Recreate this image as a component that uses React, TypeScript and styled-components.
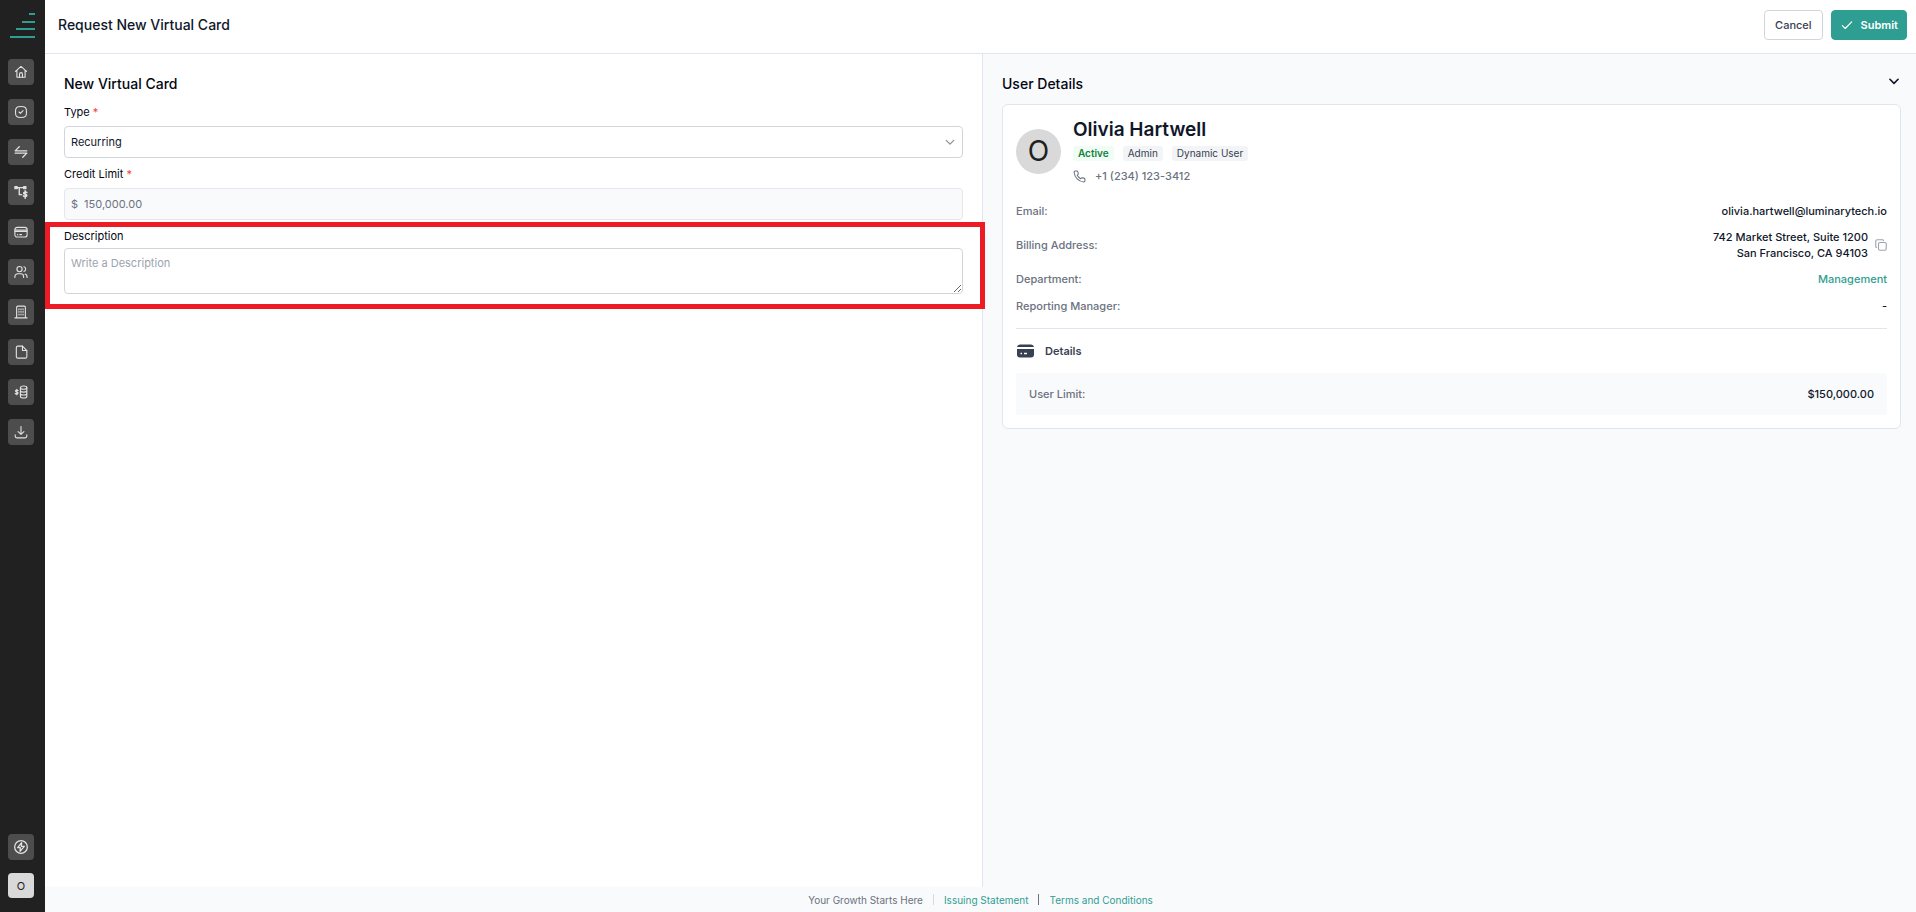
import React from 'react';
import styled, { createGlobalStyle } from 'styled-components';

const GlobalStyle = createGlobalStyle`
  *, *::before, *::after { box-sizing: border-box; }
  body {
    margin: 0;
    font-family: Inter, "Liberation Sans", sans-serif;
    font-size: 11px;
    line-height: 16px;
    color: #0f172a;
    background: #fff;
  }
  button, input, select, textarea { font: inherit; color: inherit; }
  h1, h2, h3, p, dl, dd, dt, ul { margin: 0; padding: 0; }
  a { color: #2f9e92; text-decoration: none; }
`;

const Shell = styled.div`
  display: flex;
  min-height: 100vh;
`;

const Sidebar = styled.nav`
  display: flex;
  flex-direction: column;
  align-items: flex-start;
  flex: none;
  width: 45px;
  padding: 12px 8px 14px;
  background: #212121;
`;

const Logo = styled.svg`
  display: block;
  align-self: flex-end;
  margin-bottom: 21px;
`;

const NavList = styled.ul`
  display: flex;
  flex-direction: column;
  gap: 14px;
  flex: 1;
  list-style: none;
`;

const NavButton = styled.button`
  display: flex;
  align-items: center;
  justify-content: center;
  width: 26px;
  height: 26px;
  padding: 0;
  border: 0;
  border-radius: 4px;
  background: #4d4d4d;
  color: #e2e2e2;
`;

const ProfileButton = styled(NavButton)`
  height: 25px;
  margin-top: 13px;
  background: #d9d9d9;
  color: #212121;
`;

const Main = styled.div`
  display: flex;
  flex-direction: column;
  flex: 1;
  min-width: 0;
`;

const Header = styled.header`
  display: flex;
  align-items: flex-start;
  justify-content: space-between;
  height: 54px;
  padding: 10px 9px 0 13px;
  border-bottom: 1px solid #e2e5ee;
`;

const PageTitle = styled.h1`
  font-size: 14px;
  font-weight: 500;
  line-height: 30px;
`;

const Actions = styled.div`
  display: flex;
  gap: 8px;
`;

const Button = styled.button<{ $primary?: boolean }>`
  display: flex;
  align-items: center;
  gap: 7px;
  height: 30px;
  padding: ${p => (p.$primary ? '0 8px' : '0 10px')};
  border: 1px solid ${p => (p.$primary ? '#2f9e92' : '#d1d5db')};
  border-radius: 4px;
  background: ${p => (p.$primary ? '#2f9e92' : '#fff')};
  color: ${p => (p.$primary ? '#fff' : '#374151')};
  font-weight: ${p => (p.$primary ? 600 : 500)};
`;

const Panes = styled.main`
  display: grid;
  grid-template-columns: 938fr 933fr;
  flex: 1;
`;

const FormPane = styled.form`
  padding: 20px 19px;
  border-right: 1px solid #e2e5ee;
`;

const DetailPane = styled.section`
  padding: 20px 15px 20px 19px;
  background: #f9fafc;
`;

const SectionTitle = styled.h2`
  font-size: 14px;
  font-weight: 500;
  line-height: 20px;
  color: #030712;
`;

const Field = styled.div<{ $tight?: boolean }>`
  position: relative;
  display: flex;
  flex-direction: column;
  gap: ${p => (p.$tight ? '3px' : '5px')};
  margin-top: 7px;

  ${SectionTitle} + & { margin-top: 9px; }
`;

const Label = styled.label`
  line-height: 18px;
  color: #030712;

  span { color: #ef4444; }
`;

const SelectWrap = styled.div`
  position: relative;
  display: flex;

  svg {
    position: absolute;
    top: 11px;
    right: 8px;
    pointer-events: none;
  }
`;

const Select = styled.select`
  flex: 1;
  height: 32px;
  padding: 0 6px;
  border: 1px solid #d1d5db;
  border-radius: 4px;
  background: #fff;
  appearance: none;
`;

const AmountBox = styled.div`
  display: flex;
  align-items: center;
  gap: 6px;
  height: 32px;
  padding: 0 6px;
  border: 1px solid #e5e7eb;
  border-radius: 4px;
  background: #f9fafc;
  color: #6b7280;
`;

const AmountInput = styled.input`
  flex: 1;
  min-width: 0;
  padding: 0;
  border: 0;
  background: transparent;
`;

const TextArea = styled.textarea`
  display: block;
  height: 46px;
  padding: 6px;
  border: 1px solid #d1d5db;
  border-radius: 4px;
  resize: vertical;

  &::placeholder { color: #9ca3af; }
`;

const Highlight = styled.div`
  position: absolute;
  inset: -5px -22px -15px -19px;
  border: 5px solid #ed1c24;
  pointer-events: none;
`;

const TitleRow = styled.div`
  display: flex;
  align-items: flex-start;
  justify-content: space-between;
`;

const IconButton = styled.button`
  display: flex;
  padding: 0;
  border: 0;
  background: none;
`;

const Card = styled.article`
  margin-top: 10px;
  padding: 13px;
  border: 1px solid #e2e5ee;
  border-radius: 6px;
  background: #fff;
`;

const Profile = styled.div`
  display: flex;
  align-items: center;
  gap: 12px;
`;

const Avatar = styled.div`
  display: flex;
  align-items: center;
  justify-content: center;
  width: 45px;
  height: 45px;
  border-radius: 50%;
  background: #d9d9d9;
  color: #212121;
  font-size: 28px;
`;

const Name = styled.h3`
  font-size: 19px;
  font-weight: 600;
  line-height: 24px;
`;

const Badges = styled.div`
  display: flex;
  gap: 9px;
  margin-top: 4px;
`;

const Badge = styled.span<{ $active?: boolean }>`
  padding: 0 5px;
  border-radius: 3px;
  background: ${p => (p.$active ? '#f0fdf4' : '#f3f4f6')};
  color: ${p => (p.$active ? '#15803d' : '#374151')};
  font-size: 10px;
  font-weight: ${p => (p.$active ? 600 : 400)};
  line-height: 15px;
`;

const Phone = styled.p`
  display: flex;
  align-items: center;
  gap: 9px;
  margin-top: 7px;
  color: #6b7280;
  font-weight: 500;
`;

const Facts = styled.dl`
  display: flex;
  flex-direction: column;
  gap: 9px;
  margin-top: 18px;
  padding-bottom: 13px;
  border-bottom: 1px solid #e2e5ee;
`;

const Fact = styled.div`
  display: flex;
  align-items: center;
  justify-content: space-between;
  min-height: 18px;

  dt { color: #6b7280; font-weight: 500; }
  dd { display: flex; align-items: center; gap: 7px; font-weight: 500; text-align: right; }
`;

const DetailsTitle = styled.h3`
  display: flex;
  align-items: center;
  gap: 10px;
  margin-top: 14px;
  font-size: 11px;
  font-weight: 600;
  line-height: 16px;
  color: #374151;
`;

const LimitBox = styled.dl`
  margin-top: 14px;
  padding: 12px 13px;
  border-radius: 3px;
  background: #f9fafc;
`;

const Footer = styled.footer`
  display: flex;
  align-items: center;
  justify-content: center;
  height: 25px;
  background: #f9fafc;
  color: #6b7280;
  font-size: 10px;
`;

const Separator = styled.span<{ $dark?: boolean }>`
  width: 1px;
  height: 11px;
  margin: 0 10px;
  background: ${p => (p.$dark ? '#6b7280' : '#d5d8e8')};
`;

type IconProps = { size?: number; width?: number; children: React.ReactNode };

const Icon = ({ size = 14, width = 1.9, children }: IconProps) => (
  <svg width={size} height={size} viewBox="0 0 24 24" fill="none" stroke="currentColor"
    strokeWidth={width} strokeLinecap="round" strokeLinejoin="round" aria-hidden="true">
    {children}
  </svg>
);

const navItems = [
  { name: 'Home', art: <><path d="M2.5 11 12 2.5 21.5 11M5 9v12h14V9" /><path d="M9.5 21v-5.5a2.5 2.5 0 0 1 5 0V21" /></> },
  { name: 'Approvals', art: <><path d="M12 2.5c7.5 0 9.5 2 9.5 9.5s-2 9.5-9.5 9.5-9.5-2-9.5-9.5 2-9.5 9.5-9.5Z" /><path d="m8.5 12 2.5 2.5 4.5-5" /></> },
  { name: 'Transactions', art: <path strokeWidth="2.2" d="M22 10H2l7-7M2 14h20l-7 7" /> },
  { name: 'Workflows', art: <><rect x="1.5" y="2.5" width="4" height="4" fill="currentColor" /><rect x="16.5" y="2.5" width="4" height="4" fill="currentColor" /><path strokeWidth="2.3" d="M5 4.5h12M9 4.5V16.5h4" /><path strokeWidth="2.6" d="M22 13c-1-1.2-5.5-1.2-5.5 1s5.5 1.5 5.5 4-5 2.2-6 .7M19.2 10V22.5" /></> },
  { name: 'Cards', art: <><rect x="1.5" y="4" width="21" height="16.5" rx="4" /><path d="M2 8.5h20M2 11h20M6 16.5h.5M10 16.5h3" /></> },
  { name: 'Users', art: <><circle cx="9.5" cy="7" r="4.5" /><path d="M1.5 21.5V20a5 5 0 0 1 5-5h5a5 5 0 0 1 5 5v1.5M17 3c4 1 4 7 0 8M19 15.5c2 .5 3.5 2 3.5 6" /></> },
  { name: 'Companies', art: <><path d="M4.5 21.5V4a2 2 0 0 1 2-2h11a2 2 0 0 1 2 2v17.5M1.5 22h21" /><path strokeDasharray="1.5 3" d="M8.5 6.5v12M12 6.5v12M15.5 6.5v12" /></> },
  { name: 'Documents', art: <><path d="M14.5 2h-8A2.5 2.5 0 0 0 4 4.5V20a2.5 2.5 0 0 0 2.5 2.5h13A2.5 2.5 0 0 0 22 20V9.5L14.5 2Z" /><path d="M14.5 2v7.5H22" /></> },
  { name: 'Reimbursements', art: <><path d="M7 9.5c-1-1.2-4.5-1.2-4.5.7s4.5 1.3 4.5 3.6-4 2-5 .5M4.8 7.5v9" /><ellipse cx="16.5" cy="4.5" rx="5.5" ry="2.7" /><path d="M11 4.5v15c0 3.6 11 3.6 11 0v-15M11 9.5c0 3.6 11 3.6 11 0M11 14.5c0 3.6 11 3.6 11 0" /></> },
  { name: 'Downloads', art: <path d="M12 2.5V16M7 11.5l5 4.5 5-4.5M2 17v2a3 3 0 0 0 3 3h14a3 3 0 0 0 3-3v-2" /> },
];

export default function App() {
  return (
    <Shell>
      <GlobalStyle />
      <Sidebar aria-label="Main">
        <Logo width="27" height="26" viewBox="0 0 27 26" fill="#2f9e92" aria-hidden="true">
          <path d="M19 1h6v2h-6zM12 9h13v2H12zM6 16h19v2H6zM0 24h25v2H0z" />
        </Logo>
        <NavList>
          {navItems.map(item => (
            <li key={item.name}>
              <NavButton type="button" aria-label={item.name}>
                <Icon>{item.art}</Icon>
              </NavButton>
            </li>
          ))}
        </NavList>
        <NavButton type="button" aria-label="Quick actions">
          <Icon size={16}>
            <circle cx="12" cy="12" r="9.5" />
            <path d="M13 5.5 7 13h4l-.5 5.5L17 11h-4.5L13 5.5Z" />
          </Icon>
        </NavButton>
        <ProfileButton type="button">O</ProfileButton>
      </Sidebar>

      <Main>
        <Header>
          <PageTitle>Request New Virtual Card</PageTitle>
          <Actions>
            <Button type="button">Cancel</Button>
            <Button type="submit" form="card-form" $primary>
              <Icon><path d="m4 13 5 5L20 6.5" /></Icon>
              Submit
            </Button>
          </Actions>
        </Header>

        <Panes>
          <FormPane id="card-form" onSubmit={e => e.preventDefault()}>
            <SectionTitle>New Virtual Card</SectionTitle>
            <Field>
              <Label htmlFor="type">Type <span>*</span></Label>
              <SelectWrap>
                <Select id="type" defaultValue="Recurring">
                  <option>Recurring</option>
                </Select>
                <Icon size={10} width={3}><path d="m3 8 9 9 9-9" stroke="#8b8f98" /></Icon>
              </SelectWrap>
            </Field>
            <Field>
              <Label htmlFor="limit">Credit Limit <span>*</span></Label>
              <AmountBox>
                <span>$</span>
                <AmountInput id="limit" value="150,000.00" readOnly />
              </AmountBox>
            </Field>
            <Field $tight>
              <Label htmlFor="description">Description</Label>
              <TextArea id="description" placeholder="Write a Description" />
              <Highlight />
            </Field>
          </FormPane>

          <DetailPane>
            <TitleRow>
              <SectionTitle>User Details</SectionTitle>
              <IconButton type="button" aria-label="Collapse user details">
                <Icon width={2.8}><path d="m5 9 7 7 7-7" /></Icon>
              </IconButton>
            </TitleRow>
            <Card>
              <Profile>
                <Avatar>O</Avatar>
                <div>
                  <Name>Olivia Hartwell</Name>
                  <Badges>
                    <Badge $active>Active</Badge>
                    <Badge>Admin</Badge>
                    <Badge>Dynamic User</Badge>
                  </Badges>
                  <Phone>
                    <Icon size={13}>
                      <path d="M22 17v3a2 2 0 0 1-2.2 2A19.8 19.8 0 0 1 2 4.2 2 2 0 0 1 4 2h3a2 2 0 0 1 2 1.7l.8 3.6-2 2.5a16 16 0 0 0 6.4 6.4l2.5-2 3.6.8A2 2 0 0 1 22 17Z" />
                    </Icon>
                    +1 (234) 123-3412
                  </Phone>
                </div>
              </Profile>
              <Facts>
                <Fact><dt>Email:</dt><dd>olivia.hartwell@luminarytech.io</dd></Fact>
                <Fact>
                  <dt>Billing Address:</dt>
                  <dd>
                    <span>742 Market Street, Suite 1200<br />San Francisco, CA 94103</span>
                    <IconButton type="button" aria-label="Copy address">
                      <Icon size={12} width={2.2}>
                        <g stroke="#9ca3af"><rect x="7" y="7" width="15.5" height="15.5" rx="3" /><path d="M3 17a2 2 0 0 1-1.5-2V4.5a3 3 0 0 1 3-3H15A2 2 0 0 1 17 3" /></g>
                      </Icon>
                    </IconButton>
                  </dd>
                </Fact>
                <Fact><dt>Department:</dt><dd><a href="#management">Management</a></dd></Fact>
                <Fact><dt>Reporting Manager:</dt><dd>-</dd></Fact>
              </Facts>
              <DetailsTitle>
                <svg width="19" height="14" viewBox="0 0 19 14" fill="#374151" aria-hidden="true">
                  <path d="M1 3a3 3 0 0 1 3-2.500h11A3 3 0 0 1 18 3zM1 5h17v5.500a3 3 0 0 1-3 3H4a3 3 0 0 1-3-3z" />
                  <path d="M4.500 9.500h1.500M8 9.500h3" stroke="#fff" strokeWidth="1.500" />
                </svg>
                Details
              </DetailsTitle>
              <LimitBox>
                <Fact><dt>User Limit:</dt><dd>$150,000.00</dd></Fact>
              </LimitBox>
            </Card>
          </DetailPane>
        </Panes>

        <Footer>
          <span>Your Growth Starts Here</span>
          <Separator />
          <a href="#issuing">Issuing Statement</a>
          <Separator $dark />
          <a href="#terms">Terms and Conditions</a>
        </Footer>
      </Main>
    </Shell>
  );
}
